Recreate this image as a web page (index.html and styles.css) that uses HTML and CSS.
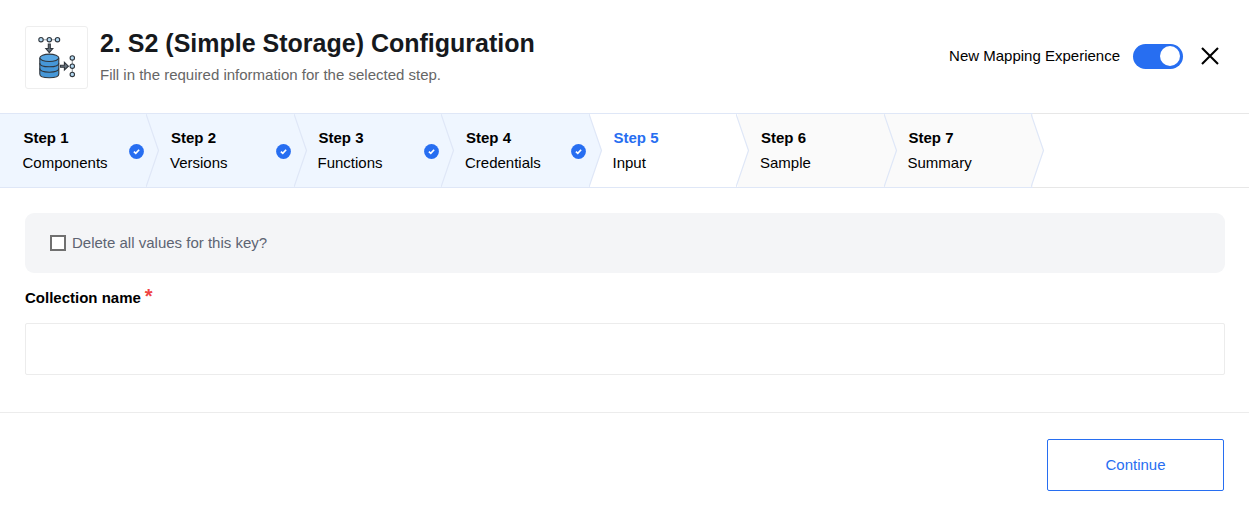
FILE: index.html
```html
<!DOCTYPE html>
<html lang="en">
<head>
<meta charset="utf-8">
<title>S2 (Simple Storage) Configuration</title>
<link rel="stylesheet" href="styles.css">
</head>
<body>
<header class="header">
  <div class="logo">
    <svg width="61" height="61" viewBox="0 0 61 61" fill="none" stroke="#30363d" stroke-width="1.1">
      <path d="M15 12.7h17M46.3 31v17" stroke="#92989d"/>
      <g fill="#b5daf3"><circle cx="15" cy="12.7" r="2.2"/><circle cx="23.3" cy="12.7" r="2.2"/><circle cx="31.5" cy="12.7" r="2.2"/><circle cx="46.3" cy="30.9" r="2.2"/><circle cx="46.3" cy="39.2" r="2.2"/><circle cx="46.3" cy="47.4" r="2.2"/></g>
      <path d="M22.3 17h2v4.5h2.5l-3.5 4.2-3.5-4.2h2.5z" fill="#68747e"/>
      <path d="M34.4 38.2h4v-2.8l4 3.8-4 3.8v-2.8h-4z" fill="#68747e"/>
      <path d="M13.8 31v16c0 5 19 5 19 0V31" fill="#4697d7"/>
      <ellipse cx="23.3" cy="30.8" rx="9.5" ry="3.7" fill="#58a6e2"/>
      <path d="M13.8 36.2c0 4.8 19 4.8 19 0M13.8 41.6c0 4.8 19 4.8 19 0"/>
    </svg>
  </div>
  <div class="heading">
    <h1 class="title">2. S2 (Simple Storage) Configuration</h1>
    <p class="subtitle">Fill in the required information for the selected step.</p>
  </div>
  <div class="actions">
    <span class="mapping">New Mapping Experience</span>
    <span class="toggle"><span class="knob"></span></span>
    <svg class="close" width="18" height="18" viewBox="0 0 18 18" stroke="#000" stroke-width="2.1" fill="none"><path d="M1 1l16 16M17 1L1 17"/></svg>
  </div>
</header>
<nav class="steps">
  <div class="step done"><div class="step-text"><b class="step-no">Step 1</b><span class="step-name">Components</span></div><svg class="check" viewBox="0 0 15 15"><circle cx="7.5" cy="7.5" r="7.4"/><path d="M4.9 7.6l1.9 1.8 3.3-3.6"/></svg><svg class="arrow" viewBox="0 0 14 73"><path d="M0 0L12.5 36.5 0 73"/></svg></div>
  <div class="step done"><div class="step-text"><b class="step-no">Step 2</b><span class="step-name">Versions</span></div><svg class="check" viewBox="0 0 15 15"><circle cx="7.5" cy="7.5" r="7.4"/><path d="M4.9 7.6l1.9 1.8 3.3-3.6"/></svg><svg class="arrow" viewBox="0 0 14 73"><path d="M0 0L12.5 36.5 0 73"/></svg></div>
  <div class="step done"><div class="step-text"><b class="step-no">Step 3</b><span class="step-name">Functions</span></div><svg class="check" viewBox="0 0 15 15"><circle cx="7.5" cy="7.5" r="7.4"/><path d="M4.9 7.6l1.9 1.8 3.3-3.6"/></svg><svg class="arrow" viewBox="0 0 14 73"><path d="M0 0L12.5 36.5 0 73"/></svg></div>
  <div class="step done"><div class="step-text"><b class="step-no">Step 4</b><span class="step-name">Credentials</span></div><svg class="check" viewBox="0 0 15 15"><circle cx="7.5" cy="7.5" r="7.4"/><path d="M4.9 7.6l1.9 1.8 3.3-3.6"/></svg><svg class="arrow" viewBox="0 0 14 73"><path d="M0 0L12.5 36.5 0 73"/></svg></div>
  <div class="step current"><div class="step-text"><b class="step-no">Step 5</b><span class="step-name">Input</span></div><svg class="arrow" viewBox="0 0 14 73"><path d="M0 0L12.5 36.5 0 73"/></svg></div>
  <div class="step todo"><div class="step-text"><b class="step-no">Step 6</b><span class="step-name">Sample</span></div><svg class="arrow" viewBox="0 0 14 73"><path d="M0 0L12.5 36.5 0 73"/></svg></div>
  <div class="step todo"><div class="step-text"><b class="step-no">Step 7</b><span class="step-name">Summary</span></div><svg class="arrow" viewBox="0 0 14 73"><path d="M0 0L12.5 36.5 0 73"/></svg></div>
</nav>
<main class="form">
  <label class="option"><span class="checkbox"></span><span class="option-text">Delete all values for this key?</span></label>
  <label class="field-label" for="collection"><span class="field-name">Collection name</span><span class="required">*</span></label>
  <input class="field" id="collection" type="text">
</main>
<footer class="footer"><button class="continue" type="button">Continue</button></footer>
</body>
</html>
```

FILE: styles.css
```css
* { box-sizing: border-box; }
body { margin: 0; background: #fff; color: #000; font-family: "Liberation Sans", Arial, sans-serif; font-size: 15px; }
.header { display: flex; height: 113px; padding: 26px 30px 0 25px; }
.logo { width: 63px; height: 63px; border: 1px solid #eee; border-radius: 3px; }
.logo svg { display: block; }
.heading { margin-left: 12px; }
.title { margin: 0; font-size: 25px; line-height: 34px; color: #16191d; white-space: nowrap; }
.subtitle { margin: 5px 0 0; line-height: 20px; font-size: 15px; color: #666; white-space: nowrap; }
.actions { margin-left: auto; display: flex; align-items: center; height: 60px; }
.mapping { white-space: nowrap; padding-bottom: 2px; }
.toggle { display: flex; justify-content: flex-end; margin-left: 13px; width: 50px; height: 25px; padding: 2px 3px; border-radius: 13px; background: #276ef1; }
.knob { width: 20px; height: 20px; border-radius: 50%; background: #fff; }
.close { margin-left: 18px; }
.steps { display: flex; height: 75px; border-top: 1px solid #e7e7e7; border-bottom: 1px solid #e7e7e7; }
.step { --fill: #fafafa; position: relative; flex: none; width: 147.5px; margin: -1px 0; padding: 15px 3.9px 0 22.5px; display: flex; justify-content: space-between; border: solid #dfe7f7; border-width: 1px 0; background: var(--fill); }
.step.done { --fill: #eff6ff; }
.step.current { --fill: #fff; }
.step-text { display: flex; flex-direction: column; }
.step-no { line-height: 18px; padding-left: 1px; }
.step-name { line-height: 18px; margin-top: 7px; }
.current .step-no { color: #276ef1; }
.check { width: 15px; height: 15px; margin: 14.5px 0 0; fill: #276ef1; }
.check path { fill: none; stroke: #fff; stroke-width: 1.7; }
.arrow { position: absolute; z-index: 1; left: calc(100% - 1.5px); top: 0; width: 14px; height: 73px; fill: var(--fill); stroke: #dfe7f7; stroke-width: 1.2; }
.form { height: 224px; padding: 25px 24px 0 25px; display: flex; flex-direction: column; }
.option { display: flex; align-items: center; height: 60px; padding-left: 25px; border-radius: 9px; background: #f4f5f7; color: #5d6472; }
.checkbox { width: 16px; height: 16px; border: 2px solid #707070; background: #fff; }
.option-text { margin-left: 6px; padding-bottom: 2px; }
.field-label { display: flex; margin-top: 16px; height: 18px; line-height: 18px; font-weight: bold; }
.required { margin-left: 4px; color: #ef4444; font-size: 20px; line-height: 14px; font-weight: bold; }
.field { margin-top: 16px; height: 52px; width: 100%; border: 1px solid #ececec; border-radius: 2px; background: #fff; }
.footer { display: flex; justify-content: flex-end; border-top: 1px solid #ececec; padding: 26px 25px 0 0; }
.continue { width: 177px; height: 52px; padding: 0 6px 2px; border: 1px solid #276ef1; border-radius: 2px; background: #fff; color: #276ef1; font: 15px "Liberation Sans", Arial, sans-serif; }
```
